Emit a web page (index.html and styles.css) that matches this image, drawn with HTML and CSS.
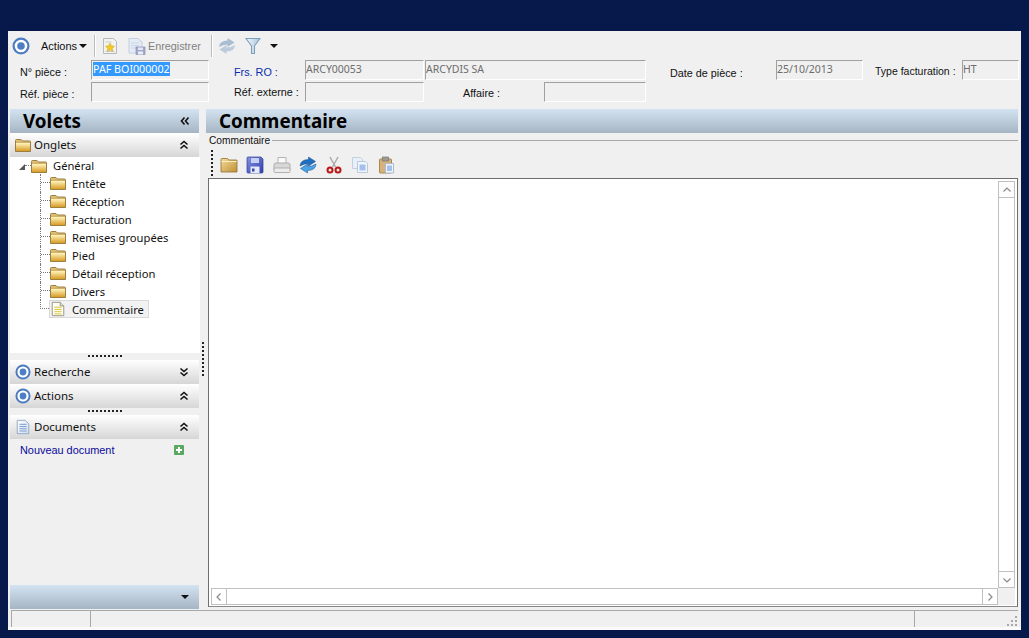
FILE: index.html
```html
<!DOCTYPE html>
<html lang="fr">
<head>
<meta charset="utf-8">
<title>Commentaire</title>
<link rel="stylesheet" href="styles.css">
</head>
<body>
<svg class="defs" width="0" height="0" aria-hidden="true">
  <defs>
    <linearGradient id="gFold" x1="0" y1="0" x2="0" y2="1"><stop offset="0" stop-color="#fff5bd"/><stop offset="1" stop-color="#d99c25"/></linearGradient>
    <linearGradient id="gFold2" x1="0" y1="0" x2="0" y2="1"><stop offset="0" stop-color="#e2c47c"/><stop offset="1" stop-color="#a87c30"/></linearGradient>
    <linearGradient id="gFoldB" x1="0" y1="0" x2="1" y2="1"><stop offset="0" stop-color="#f3dc9a"/><stop offset="1" stop-color="#c18f35"/></linearGradient>
    <linearGradient id="gPage" x1="0" y1="0" x2="1" y2="1"><stop offset="0" stop-color="#fff"/><stop offset="1" stop-color="#cfdcf0"/></linearGradient>
    <linearGradient id="gDisk" x1="0" y1="0" x2="1" y2="1"><stop offset="0" stop-color="#8392e0"/><stop offset="1" stop-color="#2f3fae"/></linearGradient>
    <linearGradient id="gFunnel" x1="0" y1="0" x2="1" y2="0"><stop offset="0" stop-color="#f2f8fc"/><stop offset="1" stop-color="#a9c4da"/></linearGradient>
    <symbol id="folder" viewBox="0 0 16 14"><path d="M.5 2.500Q.5 1.500 1.500 1.500H6L7.500 3h7q1 0 1 1v9.500H.5z" fill="url(#gFold2)" stroke="#9a7f40"/><path d="M1 5h14v8H1z" fill="url(#gFold)"/></symbol>
    <symbol id="folderb" viewBox="0 0 18 18"><path d="M1 3.500Q1 2.500 2 2.500h5.500L9 4h7.500q.5 0 .5.500V16H1z" fill="url(#gFoldB)" stroke="#8f6e30" stroke-width=".8"/><path d="M1.500 5.500h15" stroke="#fbeec2"/></symbol>
    <symbol id="target" viewBox="0 0 18 18"><circle cx="9" cy="9" r="7.400" fill="#fff" stroke="#4b7cc0" stroke-width="2.200"/><circle cx="9" cy="9" r="3.800" fill="#4e7fc6"/></symbol>
    <symbol id="note" viewBox="0 0 16 18"><path d="M1.500 1.500h9l4 4v11h-13z" fill="#fffdf0" stroke="#8e8e80"/><path d="M10.500 1.500v4h4" fill="#ece8d0" stroke="#8e8e80"/><path d="M4 7h8M4 9.500h8M4 12h8M4 14.500h8" stroke="#d8bf30"/></symbol>
    <symbol id="doc" viewBox="0 0 16 18"><path d="M1.500 1.500h9l4 4v11h-13z" fill="url(#gPage)" stroke="#8ea2c0"/><path d="M4 6h8M4 8.500h8M4 11h8M4 13.500h8" stroke="#6f94cc"/></symbol>
    <symbol id="memo" viewBox="0 0 16 18"><path d="M1.500 1.500h10l3 3v12h-13z" fill="#f3f3ee" stroke="#b4b8c0"/><path d="M3.500 5h6M3.500 14.500h9" stroke="#c8ccd4"/><path d="M8 6l1.400 2.800 3.100.4-2.200 2.200.5 3L8 13l-2.800 1.400.5-3-2.200-2.200 3.100-.4z" fill="#f0c92a" stroke="#d0a020" stroke-width=".5"/></symbol>
    <symbol id="savegrey" viewBox="0 0 18 18"><path d="M1 1.500h9l4 3.500v11H1z" fill="#e4ebf5" stroke="#c3d0e0"/><path d="M3 6h8M3 8.500h8M3 11h5" stroke="#c8d6e8"/><rect x="8" y="10" width="9" height="7.500" fill="#a2a8cc" stroke="#8a90b8" stroke-width=".7"/><rect x="10" y="10.500" width="5" height="2.500" fill="#e4e6f2"/><rect x="10" y="14.500" width="5" height="3" fill="#eceef6"/></symbol>
    <symbol id="refreshgrey" viewBox="0 0 18 18"><path d="M1 10Q1.500 3.500 9.500 3.500V1l7 4.500-7 4.500V7.500Q5 7.500 1 10z" fill="#a8bdd2"/><path d="M17 8q-.5 6.500-8.500 6.500V17l-7-4.500 7-4.500v2.500q4.500 0 8.500-2.500z" fill="#bccbdb"/></symbol>
    <symbol id="refresh" viewBox="0 0 18 18"><path d="M1 10Q1.500 3.500 9.500 3.500V1l7 4.500-7 4.500V7.500Q5 7.500 1 10z" fill="#1f6fc0" stroke="#124a8c" stroke-width=".5"/><path d="M17 8q-.5 6.500-8.500 6.500V17l-7-4.500 7-4.500v2.500q4.500 0 8.500-2.500z" fill="#4aa3e6" stroke="#124a8c" stroke-width=".5"/></symbol>
    <symbol id="filter" viewBox="0 0 16 18"><path d="M1 1.500h14L9.500 9v7.500h-3V9z" fill="url(#gFunnel)" stroke="#7f9fbc" stroke-width="1.100"/></symbol>
    <symbol id="disk" viewBox="0 0 18 18"><path d="M1 2q0-1 1-1h13l2 2v13q0 1-1 1H2q-1 0-1-1z" fill="url(#gDisk)" stroke="#2d3c96" stroke-width=".7"/><rect x="5" y="2" width="8" height="5" fill="#c6cef2"/><rect x="4.500" y="10.500" width="9" height="6.500" fill="#e6e9f7"/><rect x="6" y="12.500" width="2.500" height="3" fill="#3647a8"/></symbol>
    <symbol id="printer" viewBox="0 0 18 18"><path d="M5 1.500h8v6H5z" fill="#fafafa" stroke="#b4b4b4"/><path d="M1 9q0-2 2-2h12q2 0 2 2v5H1z" fill="#d8d8d8" stroke="#acacac"/><rect x="1" y="12" width="16" height="4.500" rx="1" fill="#ececec" stroke="#b0b0b0"/></symbol>
    <symbol id="scissors" viewBox="0 0 16 18"><path d="M4 1l5.500 10M12 1L6.500 11" stroke="#a8a8a8" stroke-width="1.400" fill="none"/><circle cx="4" cy="14" r="2.500" fill="#f0e8e8" stroke="#b81818" stroke-width="2"/><circle cx="12" cy="14" r="2.500" fill="#f0e8e8" stroke="#b81818" stroke-width="2"/></symbol>
    <symbol id="copy" viewBox="0 0 18 18"><path d="M1.500 1.500h8l2 2v9h-10z" fill="#e8eff8" stroke="#c4d0e2"/><path d="M6.500 5.500h8l2 2v9h-10z" fill="#f2f6fb" stroke="#b9c8dc"/><rect x="8.500" y="8.500" width="6" height="6" fill="#a6c0ec"/></symbol>
    <symbol id="paste" viewBox="0 0 18 18"><rect x="1.500" y="3" width="12" height="14" rx="1" fill="#d7b27a" stroke="#a98550"/><rect x="4.500" y="1" width="6" height="4" fill="#9c9c94" stroke="#77776f" stroke-width=".7"/><path d="M7.500 7.500h8v9.500h-8z" fill="#f2f6fb" stroke="#a9bbd2"/><rect x="9" y="9.500" width="5" height="5.500" fill="#a6c0ec"/></symbol>
    <symbol id="up2" viewBox="0 0 10 10"><path d="M1.500 4.500L5 1.500 8.500 4.500M1.500 8.500L5 5.500 8.500 8.500" fill="none" stroke="#111" stroke-width="1.600"/></symbol>
    <symbol id="down2" viewBox="0 0 10 10"><path d="M1.500 1.500L5 4.500 8.500 1.500M1.500 5.500L5 8.500 8.500 5.500" fill="none" stroke="#111" stroke-width="1.600"/></symbol>
    <symbol id="left2" viewBox="0 0 10 10"><path d="M4.500 1.500L1.500 5 4.500 8.500M8.500 1.500L5.500 5 8.500 8.500" fill="none" stroke="#111" stroke-width="1.600"/></symbol>
    <symbol id="plus" viewBox="0 0 10 10"><rect width="10" height="10" rx="1" fill="#5ba860"/><path d="M5 2v6M2 5h6" stroke="#fff" stroke-width="2"/></symbol>
  </defs>
</svg>

<main class="window">
  <div class="toolbar">
    <svg class="i18 tb-target"><use href="#target"/></svg>
    <span class="tb-actions">Actions</span><span class="caret"></span>
    <span class="tb-sep"></span>
    <svg class="page tb-memo"><use href="#memo"/></svg>
    <svg class="i18 tb-save"><use href="#savegrey"/></svg>
    <span class="tb-disabled">Enregistrer</span>
    <span class="tb-sep tb-sep2"></span>
    <svg class="i18 tb-refresh"><use href="#refreshgrey"/></svg>
    <svg class="page tb-filter"><use href="#filter"/></svg>
    <span class="caret tb-caret2"></span>
  </div>

  <div class="form">
    <span class="lbl c1">N° pièce :</span>
    <div class="field c2 white"><span class="sel">PAF BOI000002</span></div>
    <span class="lbl c4 link">Frs. RO :</span>
    <div class="field c5 ro">ARCY00053</div>
    <div class="field c78 ro">ARCYDIS SA</div>
    <span class="lbl c10">Date de pièce :</span>
    <div class="field c11 ro">25/10/2013</div>
    <span class="lbl c13">Type facturation :</span>
    <div class="field c14 ro">HT</div>

    <span class="lbl c1 r2 lower">Réf. pièce :</span>
    <div class="field c2 r2"></div>
    <span class="lbl c4 r2">Réf. externe :</span>
    <div class="field c5 r2"></div>
    <span class="lbl c7 r2 affaire">Affaire :</span>
    <div class="field c8 r2"></div>
  </div>

  <div class="content">
    <aside class="volets">
      <div class="band"><h2>Volets</h2><svg class="chev"><use href="#left2"/></svg></div>
      <div class="sec sec-first"><svg class="i16 sec-i"><use href="#folder"/></svg><span>Onglets</span><svg class="chev"><use href="#up2"/></svg></div>
      <div class="tree">
        <div class="root"><span class="tri"></span><span class="rootdash"></span><svg class="fold"><use href="#folder"/></svg><span class="root-t">Général</span></div>
        <div class="kid"><span class="conn"></span><svg class="fold"><use href="#folder"/></svg><span class="kid-t">Entête</span></div>
        <div class="kid"><span class="conn"></span><svg class="fold"><use href="#folder"/></svg><span class="kid-t">Réception</span></div>
        <div class="kid"><span class="conn"></span><svg class="fold"><use href="#folder"/></svg><span class="kid-t">Facturation</span></div>
        <div class="kid"><span class="conn"></span><svg class="fold"><use href="#folder"/></svg><span class="kid-t">Remises groupées</span></div>
        <div class="kid"><span class="conn"></span><svg class="fold"><use href="#folder"/></svg><span class="kid-t">Pied</span></div>
        <div class="kid"><span class="conn"></span><svg class="fold"><use href="#folder"/></svg><span class="kid-t">Détail réception</span></div>
        <div class="kid"><span class="conn"></span><svg class="fold"><use href="#folder"/></svg><span class="kid-t">Divers</span></div>
        <div class="kid last"><span class="conn"></span><div class="picked"><svg class="fold-note"><use href="#note"/></svg><span class="kid-t">Commentaire</span></div></div>
      </div>
      <div class="grip"><span></span></div>
      <div class="sec"><svg class="i16 sec-i"><use href="#target"/></svg><span>Recherche</span><svg class="chev"><use href="#down2"/></svg></div>
      <div class="sec"><svg class="i16 sec-i"><use href="#target"/></svg><span>Actions</span><svg class="chev"><use href="#up2"/></svg></div>
      <div class="grip"><span></span></div>
      <div class="sec"><svg class="i16 sec-i"><use href="#doc"/></svg><span>Documents</span><svg class="chev"><use href="#up2"/></svg></div>
      <div class="docs"><span class="newdoc">Nouveau document</span><svg class="plus"><use href="#plus"/></svg></div>
      <div class="band band-foot"><span class="caret caret-foot"></span></div>
    </aside>

    <div class="sash"><span></span></div>

    <section class="pane">
      <div class="band"><h2>Commentaire</h2></div>
      <div class="group"><span>Commentaire</span><i></i></div>
      <div class="edit-tools">
        <span class="vgrip"></span>
        <svg class="tool t-a"><use href="#folderb"/></svg>
        <svg class="tool"><use href="#disk"/></svg>
        <svg class="tool"><use href="#printer"/></svg>
        <svg class="tool"><use href="#refresh"/></svg>
        <svg class="tool"><use href="#scissors"/></svg>
        <svg class="tool"><use href="#copy"/></svg>
        <svg class="tool"><use href="#paste"/></svg>
      </div>
      <div class="editor">
        <div class="text"></div>
        <div class="vbar">
          <div class="sbtn"><svg viewBox="0 0 10 10"><path d="M1.500 6.500L5 3 8.500 6.500" fill="none" stroke="#8a8a8a" stroke-width="1.200"/></svg></div>
          <div class="track"></div>
          <div class="sbtn sbtn-b"><svg viewBox="0 0 10 10"><path d="M1.500 3.500L5 7 8.500 3.500" fill="none" stroke="#8a8a8a" stroke-width="1.200"/></svg></div>
        </div>
        <div class="hbar">
          <div class="hbtn"><svg viewBox="0 0 10 10"><path d="M6.500 1.500L3 5 6.500 8.500" fill="none" stroke="#8a8a8a" stroke-width="1.200"/></svg></div>
          <div class="track"></div>
          <div class="hbtn hbtn-r"><svg viewBox="0 0 10 10"><path d="M3.500 1.500L7 5 3.500 8.500" fill="none" stroke="#8a8a8a" stroke-width="1.200"/></svg></div>
        </div>
        <div class="corner"></div>
      </div>
    </section>
  </div>

  <footer class="status">
    <div class="cell cell-a"></div>
    <div class="cell cell-b"></div>
    <div class="cell cell-c"><svg class="rgrip" viewBox="0 0 12 12"><path d="M9 1h2v2H9zM5 5h2v2H5zM9 5h2v2H9zM1 9h2v2H1zM5 9h2v2H5zM9 9h2v2H9z" fill="#a8a8a8"/></svg></div>
  </footer>
</main>
</body>
</html>
```
FILE: styles.css
```css
* { box-sizing: border-box; }
html, body { margin: 0; height: 100%; }
body {
  background: #06194a;
  padding: 31px 8px 8px;
  overflow: hidden;
  font-family: "Liberation Sans", Arial, sans-serif;
  font-size: 11px;
  color: #111;
}
.defs { position: absolute; }
.window {
  width: 1013px;
  height: 599px;
  background: #f0f0f0;
  display: flex;
  flex-direction: column;
}

/* top toolbar */
.toolbar { height: 29px; display: flex; align-items: center; flex: none; }
.i18 { width: 18px; height: 18px; flex: none; }
.i16 { width: 16px; height: 16px; flex: none; }
.page { width: 16px; height: 18px; flex: none; }
.tb-target { margin-left: 4px; }
.tb-actions { margin-left: 11px; font-size: 11px; width: 36px; white-space: nowrap; }
.caret { width: 0; height: 0; border: 4px solid transparent; border-top-color: #111; border-bottom: 0; margin-left: 2px; flex: none; }
.tb-sep { width: 2px; height: 22px; margin-left: 7px; background: #bcbcbc; border-right: 1px solid #fff; flex: none; }
.tb-memo { margin-left: 6px; }
.tb-save { margin-left: 10px; }
.tb-disabled { margin-left: 2px; color: #808080; font-size: 10.800px; width: 53px; white-space: nowrap; }
.tb-sep2 { margin-left: 10px; }
.tb-refresh { margin-left: 5px; }
.tb-filter { margin-left: 9px; }
.tb-caret2 { margin-left: 9px; }

/* form */
.form {
  display: grid;
  grid-template-columns: 12px 71px 118px 25px 71px 119px 1px 119px 102px 24px 106px 87px 12px 87px 57px;
  grid-template-rows: 20px 20px;
  row-gap: 2px;
  flex: none;
  height: 49px;
  align-content: start;
}
.lbl { padding-top: 5px; line-height: 14px; white-space: nowrap; font-size: 10.800px; }
.link { color: #0a2ab0; }
.c1 { grid-column: 2; }
.c2 { grid-column: 3; }
.c4 { grid-column: 5; }
.c5 { grid-column: 6; }
.c7 { grid-column: 8; }
.c8 { grid-column: 9; }
.c78 { grid-column: 8 / 10; }
.c10 { grid-column: 11; }
.c11 { grid-column: 12; }
.c13 { grid-column: 14; }
.c14 { grid-column: 15; }
.r2 { grid-row: 2; }
.r2.lbl { padding-top: 3px; }
.r2.lower { padding-top: 5px; }
.affaire { padding-left: 38px; }
.r2.affaire { padding-top: 4px; }
.c13.lbl { padding-top: 4px; font-size: 10.500px; }
.c10.lbl { padding-top: 6px; }
.field {
  border-top: 1px solid #a0a0a0;
  border-left: 1px solid #a0a0a0;
  border-bottom: 1px solid #fff;
  border-right: 1px solid #fff;
  font-family: "Noto Sans", sans-serif;
  font-size: 10.500px;
  line-height: 16px;
  padding: 0;
  color: #6d6d6d;
  white-space: nowrap;
  overflow: hidden;
}
.sel { background: #3399ff; color: #fff; display: inline-block; height: 14px; line-height: 14px; margin: 1px 0 0 1px; font-size: 10.700px; }

/* content */
.content { display: flex; flex: 1; min-height: 0; padding-left: 2px; }
.volets { width: 189px; display: flex; flex-direction: column; flex: none; font-family: "Noto Sans", sans-serif; }
.sash { width: 7px; flex: none; display: flex; align-items: flex-start; justify-content: center; }
.sash span { width: 0; height: 34px; margin-top: 233px; border-left: 2px dotted #222; }
.band {
  height: 24px;
  flex: none;
  background: linear-gradient(#d4e3f1, #a6b5c4);
  display: flex;
  align-items: center;
  padding-left: 13px;
  padding-right: 9px;
  justify-content: space-between;
}
.band h2 { margin: 0; font: bold 18.800px/24px "Noto Sans", sans-serif; color: #000; }
.chev { width: 10px; height: 10px; flex: none; }
.sec {
  height: 24px;
  flex: none;
  background: linear-gradient(#ffffff, #d6d6d6);
  display: flex;
  align-items: center;
  padding-left: 5px;
  padding-right: 10px;
  font-size: 11.500px;
}
.sec > span { margin-left: 2px; margin-bottom: 2px; flex: 1; }
.sec-i { margin-right: 1px; }
.tree { background: #fff; height: 196px; width: 190px; flex: none; font-size: 11.200px; }
.root { height: 17px; display: flex; align-items: center; padding-left: 9px; }
.tri { width: 0; height: 0; border-style: solid; border-width: 0 0 6px 6px; border-color: transparent transparent #555 transparent; flex: none; margin-top: 2px; }
.rootdash { width: 6px; border-bottom: 1px dotted #777; flex: none; }
.fold { width: 16px; height: 14px; flex: none; }
.fold-note { width: 16px; height: 16px; flex: none; }
.root-t { margin-left: 6px; }
.kid { height: 18px; margin-left: 30px; display: flex; align-items: center; border-left: 1px dotted #777; }
.conn { width: 9px; height: 9px; align-self: flex-start; border-bottom: 1px dotted #777; flex: none; }
.kid-t { margin-left: 6px; }
.kid.last { border-left: 0; }
.kid.last .conn { border-left: 1px dotted #777; }
.picked { display: flex; align-items: center; height: 18px; width: 100px; background: #f2f2f2; border: 1px solid #d9d9d9; }
.grip { height: 7px; flex: none; display: flex; justify-content: center; align-items: flex-start; padding-top: 2px; }
.grip span { width: 34px; border-top: 2px dotted #222; }
.docs { flex: 1; display: flex; align-items: flex-start; padding: 4px 15px 0 10px; justify-content: space-between; }
.newdoc { color: #0a0a9c; font-size: 10.900px; line-height: 14px; font-family: "Liberation Sans", sans-serif; }
.plus { width: 10px; height: 10px; margin-top: 2px; }
.band-foot { justify-content: flex-end; }
.caret-foot { margin-right: 1px; }
.pane { width: 812px; display: flex; flex-direction: column; flex: none; }
.group { height: 14px; display: flex; align-items: center; padding-left: 3px; flex: none; font-size: 10.200px; }
.group i { flex: 1; height: 1px; background: #a8a8a8; margin-left: 2px; }
.edit-tools { height: 31px; display: flex; align-items: center; flex: none; padding-left: 5px; padding-top: 5px; }
.vgrip { height: 26px; width: 0; border-left: 2px dotted #222; margin-top: -5px; }
.tool { width: 18px; height: 18px; margin-right: 8.300px; flex: none; }
.t-a { margin-left: 7px; }
.editor {
  width: 810px;
  margin-left: 2px;
  flex: 1;
  margin-bottom: 2px;
  border: 1px solid #6e6e6e;
  border-bottom-color: #888;
  padding: 2px 0 0 2px;
  background: #fff;
  display: grid;
  grid-template-columns: 787px 17px;
  grid-template-rows: 407px 17px;
}
.vbar { display: flex; flex-direction: column; border-left: 1px solid #c0c0c0; border-right: 1px solid #c0c0c0; }
.track { flex: 1; }
.sbtn { height: 17px; flex: none; border-bottom: 1px solid #c0c0c0; border-top: 1px solid #c0c0c0; display: flex; justify-content: center; align-items: center; background: #fdfdfd; }
.sbtn svg, .hbtn svg { width: 10px; height: 10px; }
.sbtn-b { margin-top: auto; }
.hbar { display: flex; border-top: 1px solid #c0c0c0; border-bottom: 1px solid #c0c0c0; }
.hbtn { width: 16px; flex: none; border-right: 1px solid #c0c0c0; border-left: 1px solid #c0c0c0; display: flex; justify-content: center; align-items: center; }
.corner { background: #f0f0f0; }

/* status bar */
.status { height: 21px; flex: none; display: flex; padding: 1px 3px 3px 3px; background: #f0f0f0; box-shadow: inset 0 -3px 0 #fafafa; }
.cell { border-top: 1px solid #a8a8a8; border-left: 1px solid #a8a8a8; height: 17px; }
.cell-a { width: 79px; }
.cell-b { width: 824px; }
.cell-c { width: 104px; display: flex; justify-content: flex-end; align-items: flex-end; }
.rgrip { width: 12px; height: 12px; }
```
